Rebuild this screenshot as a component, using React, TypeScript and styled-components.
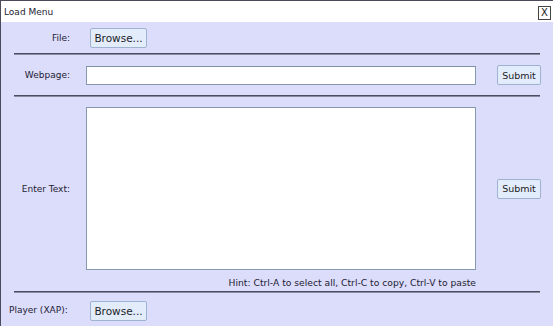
import React from 'react';
import styled, { createGlobalStyle } from 'styled-components';

const GlobalStyle = createGlobalStyle`
  html, body {
    margin: 0;
    padding: 0;
    background: #ffffff;
  }
  * {
    box-sizing: border-box;
  }
`;

const Window = styled.div`
  width: 553px;
  height: 326px;
  display: flex;
  flex-direction: column;
  border-left: 1px solid #4a4a5a;
  border-top: 1px solid #4a4a5a;
  font-family: 'DejaVu Sans', Verdana, sans-serif;
  color: #222233;
  overflow: hidden;
`;

const TitleBar = styled.div`
  height: 21px;
  flex-shrink: 0;
  display: flex;
  align-items: center;
  justify-content: space-between;
  padding: 0 2px 0 3px;
  background: #ffffff;
  font-size: 9px;
`;

const CloseButton = styled.button`
  width: 13px;
  height: 14px;
  padding: 0;
  margin-top: 2px;
  border: 1px solid #444;
  background: #ffffff;
  font-family: 'DejaVu Sans', sans-serif;
  font-size: 10px;
  line-height: 12px;
  color: #222;
`;

const Body = styled.div`
  flex: 1;
  display: flex;
  flex-direction: column;
  background: #dcdcfb;
  overflow: hidden;
`;

const Row = styled.div<{ $height: number }>`
  height: ${p => p.$height}px;
  flex-shrink: 0;
  display: grid;
  grid-template-columns: 69px 1fr 77px;
  column-gap: 16px;
  align-items: center;
`;

const TextRow = styled.div`
  height: 194px;
  flex-shrink: 0;
  padding-top: 10px;
  display: grid;
  grid-template-columns: 69px 390px 1fr;
  grid-template-rows: 163px auto;
  column-gap: 16px;
  row-gap: 3px;
  align-items: center;
`;

const Label = styled.div<{ $left?: boolean }>`
  font-size: 9px;
  text-align: ${p => (p.$left ? 'left' : 'right')};
  padding-left: ${p => (p.$left ? '8px' : '0')};
  white-space: nowrap;
`;

const Divider = styled.div`
  height: 2px;
  flex-shrink: 0;
  margin: 0 13px 0 13px;
  background: #4c4c60;
  border-bottom: 1px solid #8a8aa0;
`;

const ActionButton = styled.button<{ $wide?: boolean }>`
  height: 20px;
  width: ${p => (p.$wide ? '57px' : '44px')};
  margin-left: ${p => (p.$wide ? '4px' : '0')};
  padding: 0;
  border: 1px solid #9fb2d0;
  border-radius: 2px;
  background: #e3ecfa;
  font-family: 'DejaVu Sans', sans-serif;
  font-size: ${p => (p.$wide ? '10.5px' : '9.5px')};
  color: #1c1c28;
`;

const Field = styled.input`
  width: 390px;
  height: 19px;
  border: 1px solid #8799b0;
  border-top-color: #7d8ea6;
  background: #ffffff;
  outline: none;
`;

const TextArea = styled.textarea`
  width: 390px;
  height: 163px;
  border: 1px solid #8799b0;
  background: #ffffff;
  resize: none;
  outline: none;
  display: block;
`;

const Hint = styled.div`
  grid-column: 2;
  font-size: 9.2px;
  text-align: right;
  white-space: nowrap;
`;

const ButtonCell = styled.div`
  display: flex;
  justify-content: flex-start;
  padding-left: 5px;
`;

export default function App() {
  return (
    <>
      <GlobalStyle />
      <Window>
        <TitleBar>
          <span>Load Menu</span>
          <CloseButton>X</CloseButton>
        </TitleBar>
        <Body>
          <Row $height={31}>
            <Label>File:</Label>
            <div>
              <ActionButton $wide>Browse...</ActionButton>
            </div>
            <div />
          </Row>
          <Divider />
          <Row $height={40}>
            <Label>Webpage:</Label>
            <Field />
            <ButtonCell>
              <ActionButton>Submit</ActionButton>
            </ButtonCell>
          </Row>
          <Divider />
          <TextRow>
            <Label>Enter Text:</Label>
            <TextArea />
            <ButtonCell>
              <ActionButton>Submit</ActionButton>
            </ButtonCell>
            <Hint>Hint: Ctrl-A to select all, Ctrl-C to copy, Ctrl-V to paste</Hint>
          </TextRow>
          <Divider />
          <Row $height={34}>
            <Label $left>Player (XAP):</Label>
            <div>
              <ActionButton $wide>Browse...</ActionButton>
            </div>
            <div />
          </Row>
        </Body>
      </Window>
    </>
  );
}
